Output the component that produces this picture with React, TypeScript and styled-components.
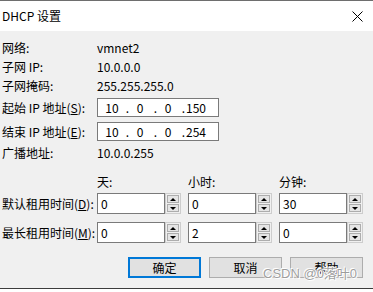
import React from "react";
import styled, { createGlobalStyle } from "styled-components";

const Global = createGlobalStyle`
  html, body { margin: 0; padding: 0; background: #ffffff; }
  body { font-family: "Noto Sans CJK SC", "Liberation Sans", sans-serif; }
  * { box-sizing: border-box; }
`;

const Window = styled.div`
  position: relative;
  width: 373px;
  height: 292px;
  display: flex;
  flex-direction: column;
  overflow: hidden;
  font-family: "Noto Sans CJK SC", "Liberation Sans", sans-serif;
  font-size: 12px;
  color: #000;
`;

const TitleBar = styled.div`
  height: 31px;
  border-top: 1px solid #6e6e6e;
  background: #ffffff;
  display: flex;
  align-items: center;
  justify-content: space-between;
  padding: 0 10px 0 2px;
`;

const Title = styled.div`
  font-size: 12px;
  line-height: 14px;
`;

const CloseIcon = styled.svg`
  width: 11px;
  height: 11px;
  display: block;
`;

const Body = styled.div`
  flex: 1;
  background: #f0f0f0;
  padding: 7px 0 0 2px;
  display: flex;
  flex-direction: column;
`;

const Row = styled.div<{ $top?: number; $h?: number }>`
  display: grid;
  grid-template-columns: 95px 1fr;
  align-items: center;
  height: ${(p) => p.$h ?? 19}px;
  margin-top: ${(p) => p.$top ?? 0}px;
`;

const Label = styled.div`
  line-height: 14px;
  white-space: nowrap;
`;

const Value = styled.div`
  line-height: 14px;
`;

const Key = styled.span`
  text-decoration: underline;
`;

const IpBox = styled.div`
  width: 122px;
  height: 19px;
  border: 1px solid #7a7a7a;
  background: #fff;
  display: flex;
  align-items: center;
  padding-left: 3px;
  line-height: 14px;
`;

const IpSeg = styled.span`
  width: 22px;
  text-align: center;
`;

const IpDot = styled.span`
  width: 6px;
  text-align: right;
`;

const SpinGrid = styled.div`
  display: grid;
  grid-template-columns: 84px 84px 84px;
  column-gap: 7px;
  align-items: center;
`;

const ColHead = styled.div`
  line-height: 14px;
`;

const Spin = styled.div`
  display: flex;
  height: 21px;
`;

const SpinInput = styled.div`
  width: 68px;
  height: 21px;
  border: 1px solid #7a7a7a;
  background: #fff;
  padding-left: 3px;
  display: flex;
  align-items: center;
  line-height: 14px;
`;

const SpinButtons = styled.div`
  width: 16px;
  height: 21px;
  border: 1px solid #cdcdcd;
  padding: 1px;
  display: flex;
  flex-direction: column;
  gap: 1px;
  background: #f0f0f0;
`;

const SpinBtn = styled.div<{ $down?: boolean }>`
  flex: 1;
  border: 1px solid #adadad;
  background: #e5e5e5;
  display: flex;
  align-items: center;
  justify-content: center;
  &::after {
    content: "";
    width: 0;
    height: 0;
    border-left: 3px solid transparent;
    border-right: 3px solid transparent;
    ${(p) =>
      p.$down
        ? "border-top: 3px solid #000;"
        : "border-bottom: 3px solid #000;"}
  }
`;

const ButtonRow = styled.div`
  display: flex;
  justify-content: flex-end;
  gap: 8px;
  padding-right: 10px;
  margin-top: 14px;
`;

const Button = styled.div<{ $focus?: boolean }>`
  width: 73px;
  height: 21px;
  background: #e1e1e1;
  border: ${(p) => (p.$focus ? "2px solid #0078d7" : "1px solid #adadad")};
  display: flex;
  align-items: center;
  justify-content: center;
  line-height: 14px;
`;

const BottomEdge = styled.div`
  height: 4px;
  border-top: 1px solid #3c3c3c;
  background: #ffffff;
`;

const Watermark = styled.div`
  position: absolute;
  left: 263px;
  top: 266px;
  font-family: "Liberation Sans", "Noto Sans CJK SC", sans-serif;
  font-size: 13px;
  line-height: 16px;
  color: rgba(140, 140, 140, 0.85);
  text-shadow: 0 0 1px #fff, 0 0 2px #fff, 1px 1px 0 #fff, -1px -1px 0 #fff;
  white-space: nowrap;
`;

const SpinField = ({ value }: { value: string }) => (
  <Spin>
    <SpinInput>{value}</SpinInput>
    <SpinButtons>
      <SpinBtn />
      <SpinBtn $down />
    </SpinButtons>
  </Spin>
);

const IpField = ({ parts }: { parts: string[] }) => (
  <IpBox>
    <IpSeg>{parts[0]}</IpSeg>
    <IpDot>.</IpDot>
    <IpSeg>{parts[1]}</IpSeg>
    <IpDot>.</IpDot>
    <IpSeg>{parts[2]}</IpSeg>
    <IpDot>.</IpDot>
    <IpSeg>{parts[3]}</IpSeg>
  </IpBox>
);

export default function App() {
  return (
    <>
      <Global />
      <Window>
        <TitleBar>
          <Title>DHCP 设置</Title>
          <CloseIcon viewBox="0 0 11 11">
            <path d="M0.5 0.5 L10.5 10.5 M10.5 0.5 L0.5 10.5" stroke="#000" strokeWidth="1" fill="none" />
          </CloseIcon>
        </TitleBar>
        <Body>
          <Row>
            <Label>网络:</Label>
            <Value>vmnet2</Value>
          </Row>
          <Row>
            <Label>子网 IP:</Label>
            <Value>10.0.0.0</Value>
          </Row>
          <Row>
            <Label>子网掩码:</Label>
            <Value>255.255.255.0</Value>
          </Row>
          <Row $top={3}>
            <Label>
              起始 IP 地址(<Key>S</Key>):
            </Label>
            <IpField parts={["10", "0", "0", "150"]} />
          </Row>
          <Row $top={5}>
            <Label>
              结束 IP 地址(<Key>E</Key>):
            </Label>
            <IpField parts={["10", "0", "0", "254"]} />
          </Row>
          <Row $top={2}>
            <Label>广播地址:</Label>
            <Value>10.0.0.255</Value>
          </Row>
          <Row $top={12} $h={16}>
            <Label />
            <SpinGrid>
              <ColHead>天:</ColHead>
              <ColHead>小时:</ColHead>
              <ColHead>分钟:</ColHead>
            </SpinGrid>
          </Row>
          <Row $top={3} $h={21}>
            <Label>
              默认租用时间(<Key>D</Key>):
            </Label>
            <SpinGrid>
              <SpinField value="0" />
              <SpinField value="0" />
              <SpinField value="30" />
            </SpinGrid>
          </Row>
          <Row $top={8} $h={21}>
            <Label>
              最长租用时间(<Key>M</Key>):
            </Label>
            <SpinGrid>
              <SpinField value="0" />
              <SpinField value="2" />
              <SpinField value="0" />
            </SpinGrid>
          </Row>
          <ButtonRow>
            <Button $focus>确定</Button>
            <Button>取消</Button>
            <Button>帮助</Button>
          </ButtonRow>
        </Body>
        <BottomEdge />
        <Watermark>CSDN @0落叶0</Watermark>
      </Window>
    </>
  );
}
